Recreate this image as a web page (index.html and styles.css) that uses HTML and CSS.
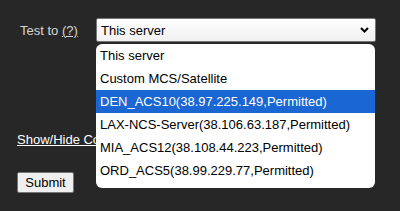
FILE: index.html
```html
<!DOCTYPE html>
<html lang="en">
  <head>
    <meta charset="UTF-8" />
    <title>Test</title>
    <link rel="stylesheet" href="styles.css">
  </head>
  <body>
    <form class="test-form">
      <div class="row">
        <label class="label">Test to <a href="#">(?)</a></label>
        <div class="select-wrap">
          <div class="select">
            <span>This server</span>
            <svg class="chevron" width="9" height="6" viewBox="0 0 9 6">
              <path d="M1 1 L4.5 4.5 L8 1" fill="none" stroke="#000" stroke-width="2"/>
            </svg>
          </div>
          <ul class="options">
            <li>This server</li>
            <li>Custom MCS/Satellite</li>
            <li class="selected">DEN_ACS10(38.97.225.149,Permitted)</li>
            <li>LAX-NCS-Server(38.106.63.187,Permitted)</li>
            <li>MIA_ACS12(38.108.44.223,Permitted)</li>
            <li>ORD_ACS5(38.99.229.77,Permitted)</li>
          </ul>
        </div>
      </div>

      <a href="#" class="toggle">Show/Hide Configuration</a>

      <button type="button" class="submit">Submit</button>
    </form>
  </body>
</html>
```

FILE: styles.css
```css
body {
  margin: 0;
  background-color: #272727;
  font-family: "Liberation Sans", Arial, sans-serif;
  font-size: 13px;
  color: #d6d6d6;
}

.test-form {
  padding: 18px 0 0 17px;
  display: flex;
  flex-direction: column;
  align-items: flex-start;
}

.row {
  display: flex;
  align-items: center;
}

.label {
  margin-left: 3px;
  width: 76px;
}

.label a {
  color: #d6d6d6;
}

.select-wrap {
  position: relative;
}

.select {
  box-sizing: border-box;
  width: 280px;
  height: 24px;
  padding: 0 6px 0 4px;
  display: flex;
  align-items: center;
  justify-content: space-between;
  background: linear-gradient(#ffffff, #f0f0f0);
  border: 1px solid #767676;
  border-radius: 2px;
  color: #000;
}

.options {
  position: absolute;
  top: 26px;
  left: 0;
  box-sizing: border-box;
  width: 279px;
  margin: 0;
  padding: 0 0 6px;
  list-style: none;
  background-color: #fff;
  border-radius: 6px;
  color: #000;
}

.options li {
  height: 23px;
  line-height: 23px;
  padding-left: 4px;
  white-space: nowrap;
}

.options .selected {
  background-color: #1a66d2;
  color: #fff;
}

.toggle {
  margin-top: 90px;
  color: #fff;
  line-height: 15px;
}

.submit {
  margin-top: 25px;
  width: 57px;
  height: 21px;
  padding: 0;
  font-family: inherit;
  font-size: 13px;
  color: #000;
  background-color: #efefef;
  border: 1px solid #767676;
  border-radius: 2px;
}
```
